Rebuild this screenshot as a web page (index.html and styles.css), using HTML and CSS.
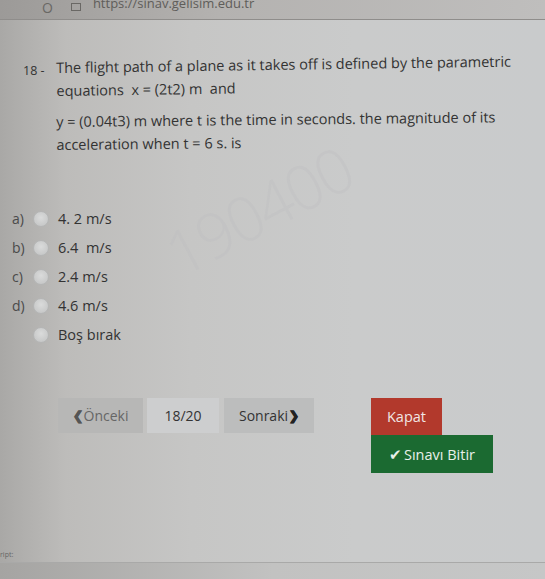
FILE: index.html
```html
<!DOCTYPE html>
<html>
<head>
<meta charset="utf-8">
<link rel="stylesheet" href="styles.css">
</head>
<body>
<div class="screen">
  <div class="topbar">
    <span class="reload">O</span>
    <span class="lock"></span>
    <span class="url">https://sinav.gelisim.edu.tr</span>
  </div>
  <div class="content">
    <div class="question">
      <div class="qnum">18 -</div>
      <div class="qtext">
        <p class="p1">The flight path of a plane as it takes off is defined by the parametric<br>equations&nbsp; x = (2t2) m&nbsp; and</p>
        <p class="p2">y = (0.04t3) m where t is the time in seconds. the magnitude of its<br>acceleration when t = 6 s. is</p>
      </div>
    </div>
    <div class="watermark">190400</div>
    <div class="options">
      <div class="opt"><span class="lbl">a)</span><span class="radio"></span><span class="val">4. 2 m/s</span></div>
      <div class="opt"><span class="lbl">b)</span><span class="radio"></span><span class="val">6.4&nbsp; m/s</span></div>
      <div class="opt"><span class="lbl">c)</span><span class="radio"></span><span class="val">2.4 m/s</span></div>
      <div class="opt"><span class="lbl">d)</span><span class="radio"></span><span class="val">4.6 m/s</span></div>
      <div class="opt"><span class="lbl"></span><span class="radio"></span><span class="val">Boş bırak</span></div>
    </div>
    <div class="nav">
      <div class="pager">
        <div class="btn prev"><span class="chev">&#10094;</span>Önceki</div>
        <div class="btn count">18/20</div>
        <div class="btn next">Sonraki<span class="chev">&#10095;</span></div>
      </div>
      <div class="actions">
        <div class="kapat">Kapat</div>
        <div class="bitir"><span class="check">&#10004;</span>Sınavı Bitir</div>
      </div>
    </div>
  </div>
  <div class="bottom">
    <span class="script">ript:</span>
  </div>
</div>
</body>
</html>
```
FILE: styles.css
```css
html, body {
  margin: 0;
  padding: 0;
}
body {
  width: 545px;
  height: 579px;
  overflow: hidden;
  font-family: "Open Sans", "Noto Sans", sans-serif;
  color: #3a3a3a;
}
.screen {
  width: 545px;
  height: 579px;
  background: linear-gradient(90deg, #a9a8a6 0%, #bdbcba 12%, #c6c6c5 35%, #cacbcb 65%, #c9cbcc 100%);
  display: flex;
  flex-direction: column;
  position: relative;
  overflow: hidden;
}
.topbar {
  height: 19px;
  background: linear-gradient(90deg, #9c9a98, #b4b2b0 40%, #bfbebd);
  border-bottom: 1px solid #8f8d8b;
  display: flex;
  align-items: flex-end;
  gap: 18px;
  padding-left: 42px;
  font-size: 13px;
  color: #55534f;
  overflow: hidden;
}
.reload {
  font-size: 14px;
  line-height: 14px;
  margin-bottom: 4px;
  color: #6a6865;
}
.lock {
  width: 8px;
  height: 6px;
  border: 1px solid #6a6865;
  margin-bottom: 8px;
}
.url {
  line-height: 12px;
  margin-bottom: 10px;
  margin-left: -6px;
  color: #5f5d5a;
}
.content {
  flex: 1;
  display: flex;
  flex-direction: column;
  position: relative;
}
.question {
  display: flex;
  margin-top: 36px;
  padding-left: 23px;
  font-size: 14.5px;
  line-height: 23px;
  color: #333;
}
.qnum {
  width: 33px;
  flex: none;
  font-size: 12.5px;
  padding-top: 3px;
}
.qtext p {
  margin: 0;
}
.p1 {
  transform: rotate(-0.8deg);
  transform-origin: left top;
}
.p2 {
  margin-top: 8px !important;
  transform: rotate(-0.6deg);
  transform-origin: left top;
}
.watermark {
  position: absolute;
  left: 150px;
  top: 200px;
  font-size: 62px;
  color: rgba(188, 190, 191, 0.35);
  transform: rotate(-28deg);
  transform-origin: left top;
  letter-spacing: -2px;
  font-weight: 300;
}
.options {
  margin-top: 52px;
  display: flex;
  flex-direction: column;
  gap: 8px;
  padding-left: 12px;
  position: relative;
}
.opt {
  display: flex;
  align-items: center;
  height: 21px;
  font-size: 14.5px;
}
.lbl {
  width: 22px;
  color: #4a4a4a;
  font-size: 14px;
}
.radio {
  width: 14px;
  height: 14px;
  border-radius: 50%;
  background: radial-gradient(circle at 50% 40%, #dadbdb, #c1c2c2);
  border: 1px solid #b5b6b6;
  margin-right: 9px;
  margin-left: -1px;
  flex: none;
}
.val {
  color: #333;
}
.nav {
  margin-top: 53px;
  display: flex;
  align-items: flex-start;
  padding-left: 58px;
}
.pager {
  display: flex;
  gap: 4px;
  width: 313px;
}
.btn {
  height: 35px;
  display: flex;
  align-items: center;
  justify-content: center;
  font-size: 14px;
  color: #333;
}
.prev {
  width: 85px;
  background: #b7b7b6;
  color: #666;
}
.count {
  width: 72px;
  background: #cdcecf;
}
.next {
  width: 90px;
  background: #bcbdbd;
  margin-left: 1px;
}
.chev {
  font-size: 12px;
  font-weight: bold;
  -webkit-text-stroke: 0.6px currentColor;
}
.prev .chev {
  margin-right: 1px;
  color: #555;
}
.next .chev {
  margin-left: 1px;
  color: #222;
}
.actions {
  display: flex;
  flex-direction: column;
}
.kapat {
  width: 71px;
  height: 37px;
  background: #b2392c;
  color: #f1e6e4;
  font-size: 14.5px;
  display: flex;
  align-items: center;
  justify-content: center;
}
.bitir {
  width: 122px;
  height: 38px;
  background: #1b6a31;
  color: #e8f0ea;
  font-size: 14.5px;
  display: flex;
  align-items: center;
  justify-content: center;
}
.check {
  font-size: 15px;
  margin-right: 2px;
}
.bottom {
  height: 16px;
  border-top: 1px solid #a9a9a8;
  position: relative;
  background: linear-gradient(90deg, #a5a4a2, #c2c2c1 50%, #c6c7c7);
}
.script {
  position: absolute;
  left: 0;
  top: -13px;
  font-size: 7px;
  color: #666;
}
```
